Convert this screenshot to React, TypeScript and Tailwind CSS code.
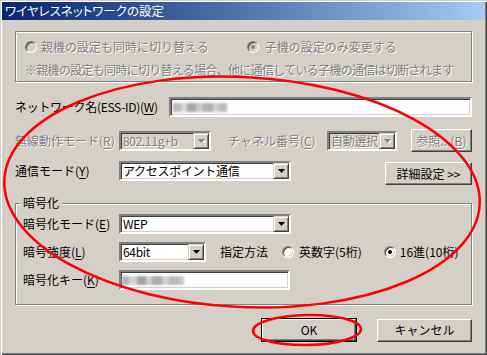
const sunken =
  'border-2 border-t-[#808080] border-l-[#808080] border-r-white border-b-white shadow-[inset_1px_1px_0_#404040,inset_-1px_-1px_0_#d4d0c8]'
const raised =
  'border border-t-white border-l-white border-r-[#404040] border-b-[#404040] shadow-[inset_-1px_-1px_0_#808080]'
const etched = 'border border-[#808080] shadow-[inset_1px_1px_0_#fff,1px_1px_0_#fff]'
const grayText = 'text-[#808080] [text-shadow:1px_1px_0_#fff]'

const Mn = ({ k }: { k: string }) => (
  <>
    (<span className="underline underline-offset-2">{k}</span>)
  </>
)

const Arrow = ({ disabled }: { disabled?: boolean }) => (
  <div className="w-[16px] h-full shrink-0 flex items-center justify-center bg-[#d4d0c8] border border-t-[#d4d0c8] border-l-[#d4d0c8] border-r-[#404040] border-b-[#404040] shadow-[inset_1px_1px_0_#fff,inset_-1px_-1px_0_#808080]">
    <svg width="7" height="4" viewBox="0 0 7 4">
      {disabled && <path d="M1 1h7L4.5 5z" fill="#fff" />}
      <path d="M0 0h7L3.5 4z" fill={disabled ? '#808080' : '#000'} />
    </svg>
  </div>
)

const Select = ({ value, w, disabled }: { value: string; w: string; disabled?: boolean }) => (
  <div className={`${sunken} ${w} h-[20px] flex ${disabled ? 'bg-[#d4d0c8]' : 'bg-white'}`}>
    <span
      className={`flex-1 min-w-0 pl-[2px] leading-[16px] whitespace-nowrap overflow-hidden tracking-[-0.3px] ${
        disabled ? grayText : ''
      }`}
    >
      {value}
    </span>
    <Arrow disabled={disabled} />
  </div>
)

const Radio = ({ checked, disabled }: { checked?: boolean; disabled?: boolean }) => (
  <span
    className={`w-[12px] h-[12px] rounded-full shrink-0 flex items-center justify-center border border-t-[#808080] border-l-[#808080] border-r-white border-b-white shadow-[inset_1px_1px_0_#404040,inset_-1px_-1px_0_#d4d0c8] ${
      disabled ? 'bg-[#d4d0c8]' : 'bg-white'
    }`}
  >
    {checked && (
      <span className={`w-[4px] h-[4px] rounded-full ${disabled ? 'bg-[#808080]' : 'bg-black'}`} />
    )}
  </span>
)

const Blur = ({ blocks }: { blocks: [number, string][] }) => (
  <div className="flex items-center h-[12px] blur-[0.8px]">
    {blocks.map(([w, c], i) => (
      <span key={i} className="h-[9px]" style={{ width: w, background: c }} />
    ))}
  </div>
)

const Button = ({ children, w, disabled, def }: any) => {
  const inner = (
    <div
      className={`${raised} bg-[#d4d0c8] h-full w-full flex items-center justify-center whitespace-nowrap ${
        disabled ? grayText : ''
      }`}
    >
      {children}
    </div>
  )
  return def ? (
    <div className={`${w} h-[24px] border border-black`}>{inner}</div>
  ) : (
    <div className={`${w} h-[23px]`}>{inner}</div>
  )
}

export default function App() {
  return (
    <div className="w-[487px] h-[355px] relative bg-[#d4d0c8] text-[12px] text-black font-['Noto_Sans_CJK_JP',sans-serif] leading-none shadow-[inset_1px_1px_0_#d4d0c8,inset_2px_2px_0_#fff,inset_-1px_-1px_0_#404040,inset_-2px_-2px_0_#808080] overflow-hidden flex flex-col">
      <div className="mt-[2px] mx-[2px] h-[18px] bg-gradient-to-r from-[#0a246a] to-[#a6caf0] flex items-center pl-[3px] text-white text-[12.5px] [font-feature-settings:'palt']">
        ワイヤレスネットワークの設定
      </div>

      <div className="px-[15px] flex flex-col">
        <div className={`${etched} mt-[11px] h-[51px] pl-[9px] pt-[8px] flex flex-col gap-[9px]`}>
          <div className="h-[14px] flex items-center">
            <Radio disabled />
            <span className={`ml-[4px] ${grayText}`}>親機の設定も同時に切り替える</span>
            <span className="ml-[38px]">
              <Radio disabled checked />
            </span>
            <span className={`ml-[6px] ${grayText}`}>子機の設定のみ変更する</span>
          </div>
          <div className={`h-[14px] flex items-center whitespace-nowrap tracking-[-0.7px] ${grayText}`}>
            ※親機の設定も同時に切り替える場合、他に通信している子機の通信は切断されます
          </div>
        </div>

        <div className="mt-[15px] h-[20px] flex items-center">
          <span className="w-[154px] whitespace-nowrap tracking-[-0.3px]">
            ネットワーク名(ESS-ID)<Mn k="W" />
          </span>
          <div className={`${sunken} flex-1 h-[20px] bg-white flex items-center pl-[2px]`}>
            <Blur
              blocks={[
                [8, '#b8b8b8'],
                [6, '#d8d8d8'],
                [9, '#a8a8a8'],
                [7, '#c8c8c8'],
                [10, '#b0b0b0'],
                [6, '#d0d0d0'],
                [8, '#bcbcbc'],
              ]}
            />
          </div>
        </div>

        <div className="mt-[13px] h-[21px] flex items-center">
          <span className={`w-[104px] whitespace-nowrap ${grayText}`}>
            無線動作モード<Mn k="R" />
          </span>
          <Select value="802.11g+b" w="w-[92px]" disabled />
          <span className={`ml-[17px] w-[99px] whitespace-nowrap ${grayText}`}>
            チャネル番号<Mn k="C" />
          </span>
          <Select value="自動選択" w="w-[70px]" disabled />
          <div className="ml-auto">
            <Button w="w-[61px]" disabled>
              参照...<Mn k="B" />
            </Button>
          </div>
        </div>

        <div className="mt-[10px] h-[24px] flex">
          <span className="w-[104px] self-start h-[20px] flex items-center whitespace-nowrap">
            通信モード<Mn k="Y" />
          </span>
          <div className="self-start">
            <Select value="アクセスポイント通信" w="w-[172px]" />
          </div>
          <div className="ml-auto self-end">
            <Button w="w-[87px]">詳細設定 &gt;&gt;</Button>
          </div>
        </div>

        <div className={`${etched} relative mt-[18px] h-[102px] pl-[7px] pt-[10px] flex flex-col gap-[8px]`}>
          <span className="absolute -top-[7px] left-[4px] px-[3px] bg-[#d4d0c8]">暗号化</span>
          <div className="h-[20px] flex items-center">
            <span className="w-[96px] whitespace-nowrap">
              暗号化モード<Mn k="E" />
            </span>
            <Select value="WEP" w="w-[172px]" />
          </div>
          <div className="h-[20px] flex items-center whitespace-nowrap">
            <span className="w-[96px]">
              暗号強度<Mn k="L" />
            </span>
            <Select value="64bit" w="w-[87px]" />
            <span className="ml-[14px]">指定方法</span>
            <span className="ml-[14px]">
              <Radio />
            </span>
            <span className="ml-[5px]">英数字(5桁)</span>
            <span className="ml-[22px]">
              <Radio checked />
            </span>
            <span className="ml-[4px]">16進(10桁)</span>
          </div>
          <div className="h-[20px] flex items-center">
            <span className="w-[96px] whitespace-nowrap">
              暗号化キー<Mn k="K" />
            </span>
            <div className={`${sunken} w-[171px] h-[20px] bg-white flex items-center pl-[1px]`}>
              <Blur
                blocks={[
                  [7, '#b4b4b4'],
                  [8, '#d4d4d4'],
                  [9, '#a4a4a4'],
                  [6, '#cccccc'],
                  [10, '#acacac'],
                  [7, '#d0d0d0'],
                  [9, '#b8b8b8'],
                  [6, '#c4c4c4'],
                ]}
              />
            </div>
          </div>
        </div>

        <div className="mt-[13px] flex justify-end items-center gap-[20px]">
          <Button w="w-[96px]" def>
            OK
          </Button>
          <Button w="w-[95px]">キャンセル</Button>
        </div>
      </div>

      <svg className="absolute inset-0 pointer-events-none" width="487" height="355">
        <ellipse
          cx="242"
          cy="192"
          rx="238"
          ry="115"
          transform="rotate(3 242 192)"
          fill="none"
          stroke="#f00"
          strokeWidth="2.5"
        />
        <ellipse
          cx="307"
          cy="330"
          rx="54"
          ry="15"
          transform="rotate(-1 307 330)"
          fill="none"
          stroke="#f00"
          strokeWidth="2.5"
        />
      </svg>
    </div>
  )
}
